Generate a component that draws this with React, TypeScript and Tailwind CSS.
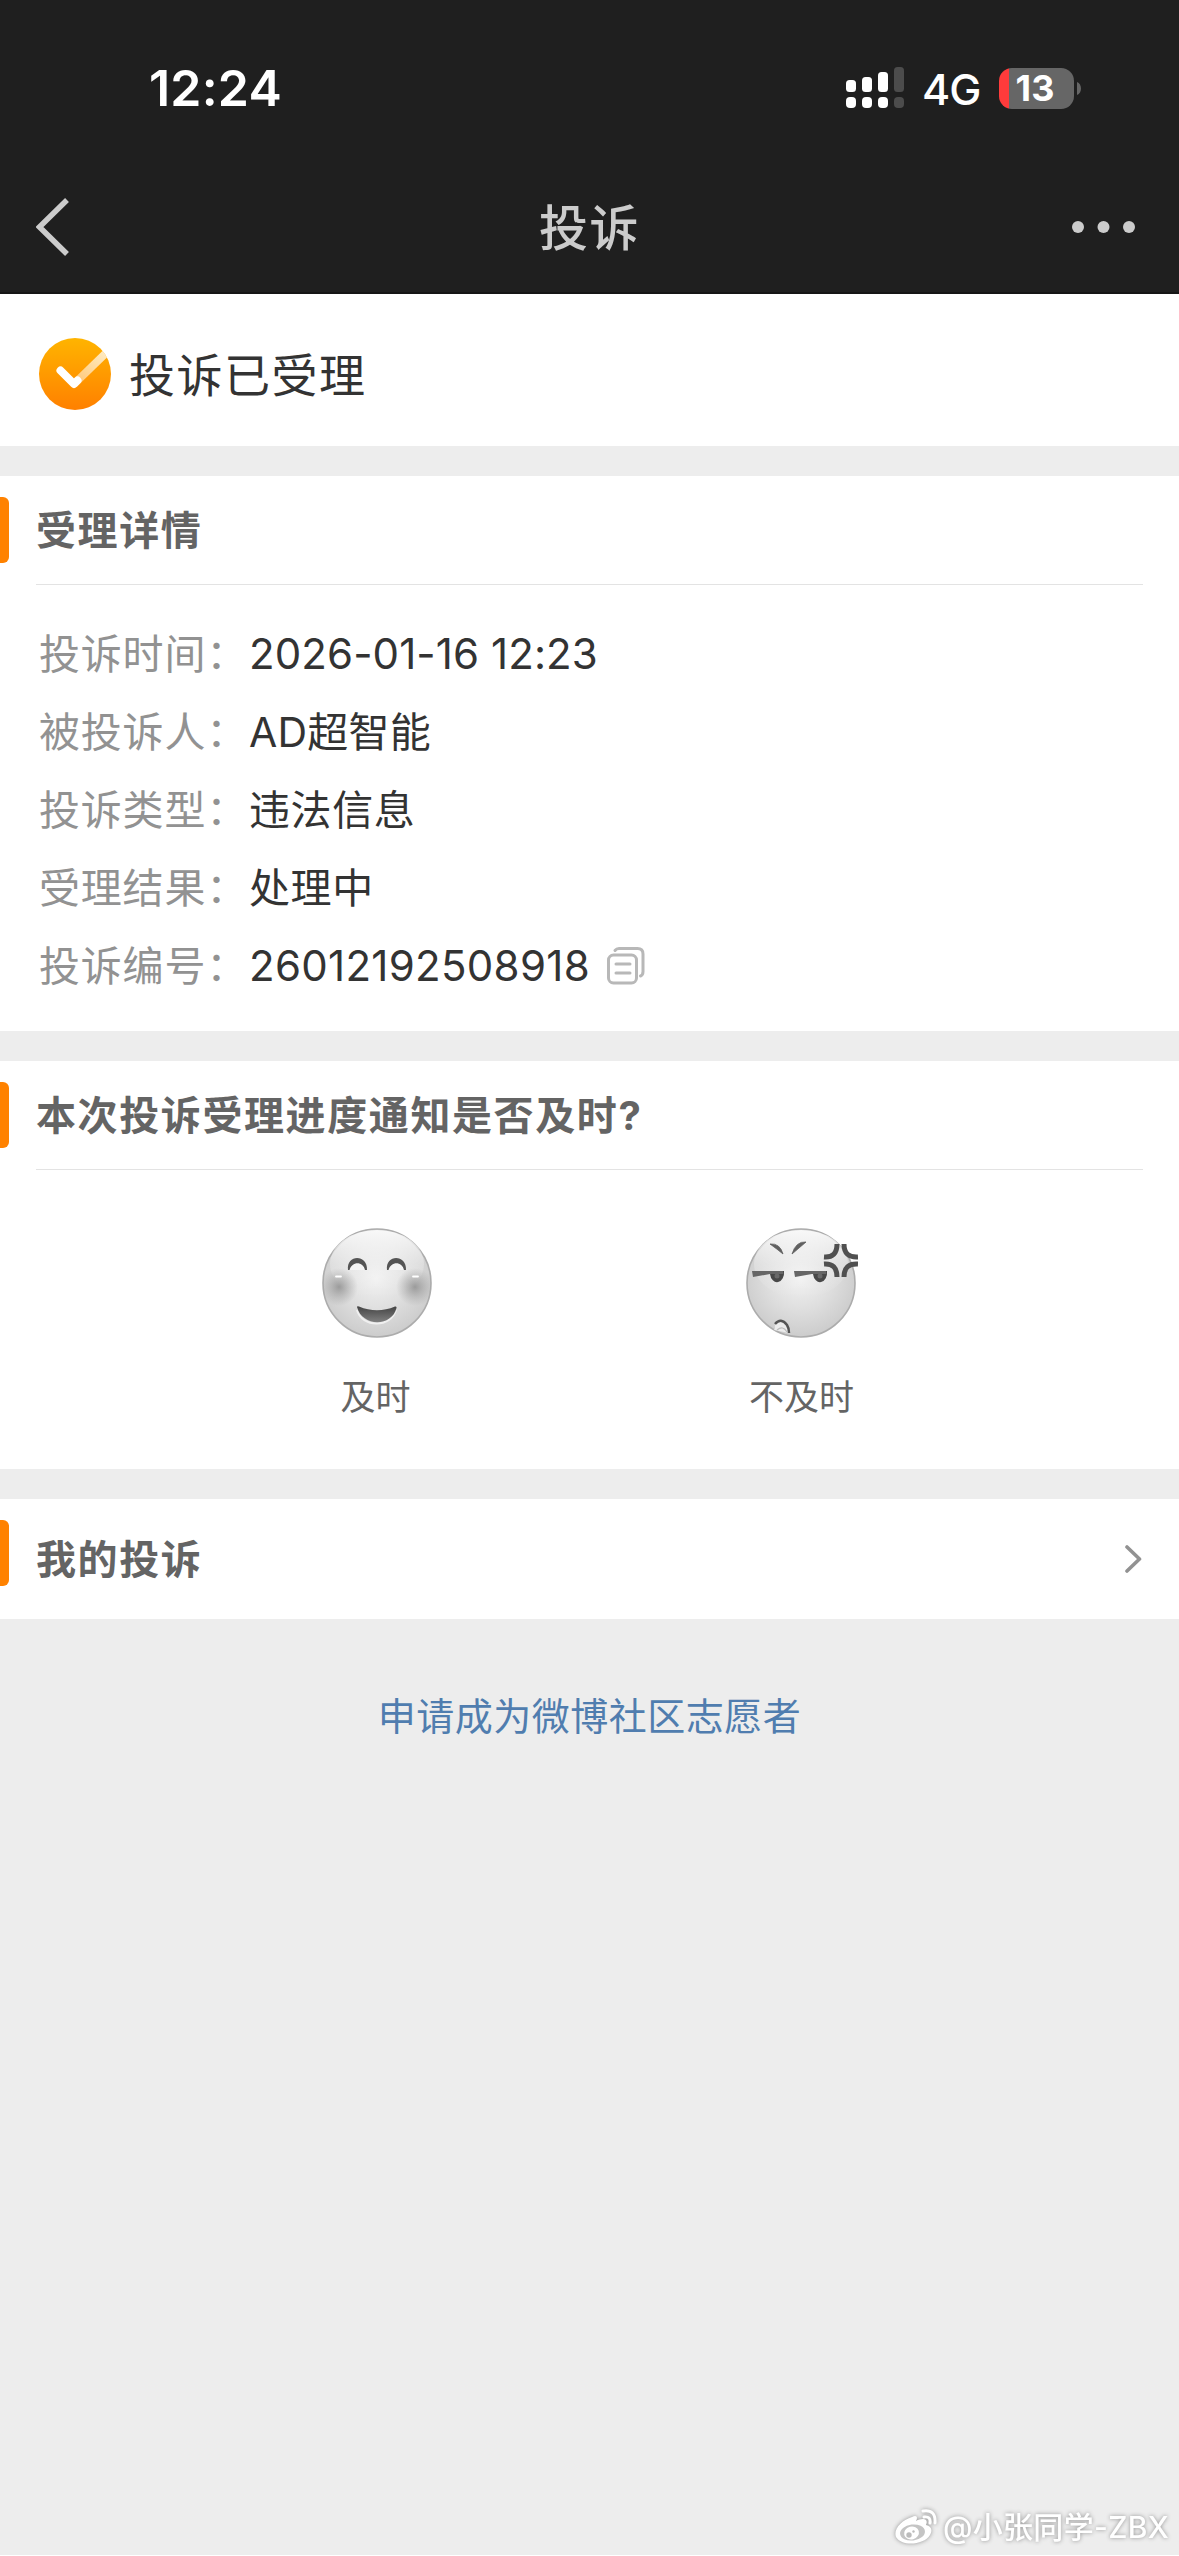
import React from 'react';

const rows = [
  { label: '投诉时间：', value: '2026-01-16 12:23', type: 'text-[42px] tracking-[0.1px]' },
  { label: '被投诉人：', value: 'AD超智能', type: 'text-[41px] tracking-[0.2px]' },
  { label: '投诉类型：', value: '违法信息', type: 'text-[41px] tracking-[0.6px]' },
  { label: '受理结果：', value: '处理中', type: 'text-[41px] tracking-[0.6px]' },
  { label: '投诉编号：', value: '26012192508918', type: 'text-[42px] tracking-[0.3px]', copy: true },
];

function Signal() {
  return (
    <svg width="58" height="42" viewBox="0 0 58 42" fill="#fff">
      <rect x="0" y="13" width="10" height="12" rx="3.5" />
      <rect x="16" y="10" width="10" height="15" rx="3.5" />
      <rect x="32" y="5" width="10" height="20" rx="3.5" />
      <rect x="48" y="0" width="10" height="25" rx="3.5" fill="#4c4c4c" />
      <rect x="0" y="30" width="10" height="11" rx="4" />
      <rect x="16" y="30" width="10" height="11" rx="4" />
      <rect x="32" y="30" width="10" height="11" rx="4" />
      <rect x="48" y="30" width="10" height="11" rx="4" fill="#4c4c4c" />
    </svg>
  );
}

function Battery() {
  return (
    <div className="flex items-center">
      <div className="flex h-[41px] w-[75px] items-center justify-center rounded-[13px] bg-[linear-gradient(to_right,#ff3b3b_0,#ff3b3b_10px,#666_10px)] pr-[3px]">
        <span className="text-[36px] leading-[41px] font-bold text-white">13</span>
      </div>
      <svg className="ml-[3px]" width="4" height="13" viewBox="0 0 4 13">
        <path d="M0 0C5.3 2 5.3 11 0 13Z" fill="#666" />
      </svg>
    </div>
  );
}

function CheckBadge() {
  return (
    <svg width="72" height="72" viewBox="0 0 72 72">
      <defs>
        <linearGradient id="badge" x1="0" y1="0" x2="0" y2="1">
          <stop offset="0" stopColor="#ffb400" />
          <stop offset="1" stopColor="#ff8000" />
        </linearGradient>
        <linearGradient id="tail" gradientUnits="userSpaceOnUse" x1="35" y1="46" x2="66" y2="16">
          <stop offset="0" stopColor="#fff" stopOpacity="0.45" />
          <stop offset="1" stopColor="#fff" stopOpacity="0.75" />
        </linearGradient>
        <clipPath id="disc"><circle cx="36" cy="36" r="36" /></clipPath>
      </defs>
      <circle cx="36" cy="36" r="36" fill="url(#badge)" />
      <path d="M35 46L68 14" stroke="url(#tail)" strokeWidth="8" clipPath="url(#disc)" />
      <path d="M21.5 32.5L35 46L38.5 42.5" fill="none" stroke="#fff" strokeWidth="8" strokeLinecap="round" strokeLinejoin="round" />
    </svg>
  );
}

function CopyIcon() {
  return (
    <svg width="38" height="38" viewBox="0 0 38 38" fill="none" stroke="#b8b8b8" strokeWidth="3" strokeLinecap="round">
      <rect x="1.5" y="8" width="28" height="28" rx="5" />
      <path d="M8 3.5Q9.500 1.500 12 1.500H30.500Q36 1.500 36 7V24.500Q36 28 33.500 29" />
      <path d="M9 17H23M9 26H23" />
    </svg>
  );
}

function FaceDefs() {
  return (
    <svg className="absolute size-0">
      <defs>
        <radialGradient id="face" gradientUnits="userSpaceOnUse" cx="54" cy="50" r="72">
          <stop offset="0" stopColor="#f1f1f1" />
          <stop offset="0.45" stopColor="#dedede" />
          <stop offset="0.8" stopColor="#cdcdcd" />
          <stop offset="1" stopColor="#c4c4c4" />
        </radialGradient>
        <linearGradient id="shine" x1="0" y1="0" x2="0" y2="1">
          <stop offset="0" stopColor="#fff" stopOpacity="0.85" />
          <stop offset="0.5" stopColor="#fff" stopOpacity="0.25" />
          <stop offset="1" stopColor="#fff" stopOpacity="0" />
        </linearGradient>
        <radialGradient id="blush">
          <stop offset="0" stopColor="#909090" stopOpacity="0.85" />
          <stop offset="1" stopColor="#a0a0a0" stopOpacity="0" />
        </radialGradient>
        <linearGradient id="mouth" x1="0" y1="0" x2="0" y2="1">
          <stop offset="0" stopColor="#444" />
          <stop offset="1" stopColor="#808080" />
        </linearGradient>
        <clipPath id="faceclip"><circle cx="55" cy="55" r="54" /></clipPath>
      </defs>
    </svg>
  );
}

function HappyFace() {
  return (
    <svg width="112" height="110" viewBox="0 0 112 110">
      <circle cx="55" cy="55" r="54" fill="url(#face)" stroke="#acacac" strokeWidth="1.6" />
      <ellipse cx="55" cy="36" rx="47" ry="34" fill="url(#shine)" />
      <g clipPath="url(#faceclip)">
        <circle cx="17" cy="59" r="19" fill="url(#blush)" />
        <circle cx="93" cy="59" r="19" fill="url(#blush)" />
      </g>
      <path d="M14 48.500H19M91 48.500H96" stroke="#fff" strokeWidth="1.800" strokeLinecap="round" />
      <path d="M27 42C27 33 43 33 43 42M66 42C66 33 82 33 82 42" fill="#f5f5f5" />
      <path d="M26 42C24 26 46 26 45 42H43C41 33 30 33 27.500 42ZM65 42C63 26 85 26 84 42H82C80 33 69 33 66.500 42Z" fill="#555" />
      <path d="M35 82C40 100 69 100 74 82" fill="none" stroke="#f0f0f0" strokeWidth="2" />
      <path d="M35 79Q35 78 37 78.500Q55 86 73 78.500Q75 78 74.500 80C70 99 40 99 35 79Z" fill="url(#mouth)" />
    </svg>
  );
}

function AngryFace() {
  return (
    <svg width="112" height="110" viewBox="0 0 112 110">
      <circle cx="55" cy="55" r="54" fill="url(#face)" stroke="#acacac" strokeWidth="1.6" />
      <ellipse cx="55" cy="36" rx="47" ry="34" fill="url(#shine)" />
      <path d="M24 16Q34 15 37 26Q31 21 24 16ZM60 14Q50 13 46 26Q53 20 60 14Z" fill="#606060" stroke="#606060" strokeWidth="0.800" />
      <path d="M24 43H38A7 9.500 0 0 1 24 46ZM67 43H81A7 9.500 0 0 1 67 46Z" fill="#484848" />
      <path d="M6 43H37V46H24L7 49ZM48 43H80V46H66L49 49Z" fill="#666" />
      <circle cx="31" cy="48" r="2.500" fill="#6a6a6a" /><circle cx="74" cy="48" r="2.500" fill="#6a6a6a" />
      <path d="M29 100C27 92 42 91 43 105L28 102Z" fill="#ececec" />
      <path d="M29 96Q35 89 41 97Q43 100 43 105" fill="none" stroke="#555" strokeWidth="2.500" />
      <path d="M31 102Q37 97 41 104" fill="none" stroke="#bbb" strokeWidth="1.200" />
      <path d="M78 29Q91 30 91 16M98 16Q98 30 112 29M78 36Q91 35 91 49M98 49Q98 35 112 36" fill="none" stroke="#505050" strokeWidth="5" />
    </svg>
  );
}

function SectionTitle({ children, low = false }: { children: React.ReactNode; low?: boolean }) {
  return (
    <div className="flex h-[66px] items-start">
      <div className="h-[66px] w-[9px] rounded-r-[6px] bg-[#ff8200]" />
      <h2 className={`ml-[27px] text-[40px] leading-[66px] font-bold tracking-[1.6px] text-[#646464] ${low ? 'pt-[7px]' : 'pt-px'}`}>{children}</h2>
    </div>
  );
}

function Watermark() {
  return (
    <div className="flex items-center justify-end gap-[6px] pr-[10px] pb-[8px] text-white drop-shadow-[0_0_2px_#909090]">
      <svg width="42" height="36" viewBox="0 0 42 36">
        <path d="M17 8C22 5 23 9 21 12C27 9 34 9 31 16C36 17 38 21 35 26C29 36 7 38 1 28C-2 20 7 11 17 8Z" fill="#fff" />
        <ellipse cx="17.500" cy="23.500" rx="12.500" ry="8" fill="#c4c4c4" transform="rotate(-7 17.500 23.500)" />
        <ellipse cx="16.500" cy="24" rx="7.500" ry="6.500" fill="#fff" transform="rotate(-15 16.500 24)" />
        <circle cx="14" cy="26" r="2.700" fill="#bbb" /><circle cx="18.500" cy="22.500" r="1.200" fill="#bbb" />
        <path d="M28 2Q41 0 40 14M29 8Q36 7 35 14" fill="none" stroke="#fff" strokeWidth="3" strokeLinecap="round" />
      </svg>
      <span className="text-[30px] leading-[40px] font-medium tracking-[0.3px]">@小张同学-ZBX</span>
    </div>
  );
}

export default function App() {
  return (
    <div className="flex h-[2556px] w-[1179px] flex-col overflow-hidden bg-[#ededed] font-['Inter','Noto_Sans_CJK_SC',sans-serif]">
      <FaceDefs />
      <header className="flex h-[294px] shrink-0 flex-col border-b-2 border-[#161616] bg-[#1f1f1f]">
        <div className="flex h-[176px] items-center justify-between pr-[98px] pl-[149px]">
          <span className="text-[50px] leading-[60px] font-semibold tracking-[0.2px] text-white">12:24</span>
          <div className="flex items-center">
            <Signal />
            <span className="ml-[18px] w-[77px] pt-[2px] text-[43px] leading-[42px] font-medium tracking-[-1px] text-white">4G</span>
            <Battery />
          </div>
        </div>
        <div className="flex h-[102px] items-center justify-between pr-[43px] pl-[36px]">
          <svg width="64" height="58" viewBox="0 0 64 58"><path d="M31 2L3.500 29L31 56" fill="none" stroke="#ccc" strokeWidth="5.500" /></svg>
          <h1 className="pt-[4px] pl-[7px] text-[49px] leading-[60px] font-medium tracking-[1.5px] text-[#ccc]">投诉</h1>
          <svg width="64" height="12" viewBox="0 0 64 12" fill="#ccc"><circle cx="6" cy="6" r="6" /><circle cx="31.500" cy="6" r="6" /><circle cx="57" cy="6" r="6" /></svg>
        </div>
      </header>

      <main className="flex flex-col gap-[30px]">
        <section className="flex h-[152px] items-center gap-[18px] bg-white pt-[8px] pl-[39px]">
          <CheckBadge />
          <p className="pt-[2px] text-[46px] leading-[60px] tracking-[1.5px] text-[#333]">投诉已受理</p>
        </section>

        <section className="h-[555px] bg-white pt-[21px]">
          <SectionTitle>受理详情</SectionTitle>
          <div className="mx-[36px] mt-[21px] border-t border-[#e3e3e3] pt-[30px]">
            {rows.map((r) => (
              <div key={r.label} className="flex h-[78px] items-center pl-[3px] leading-[60px]">
                <span className="w-[210px] text-[41px] tracking-[0.8px] whitespace-nowrap text-[#929292]">{r.label}</span>
                <span className={`text-[#333] ${r.type}`}>{r.value}</span>
                {r.copy && <div className="ml-[17px]"><CopyIcon /></div>}
              </div>
            ))}
          </div>
        </section>

        <section className="h-[408px] bg-white pt-[21px]">
          <SectionTitle>本次投诉受理进度通知是否及时?</SectionTitle>
          <div className="mx-[36px] mt-[21px] flex justify-center gap-[312px] border-t border-[#e3e3e3] pt-[58px]">
            <div className="flex w-[112px] flex-col items-center gap-[29px]">
              <HappyFace />
              <span className="mr-[4px] text-[35px] leading-[60px] whitespace-nowrap text-[#646464]">及时</span>
            </div>
            <div className="flex w-[112px] flex-col items-center gap-[29px]">
              <AngryFace />
              <span className="text-[35px] leading-[60px] whitespace-nowrap text-[#646464]">不及时</span>
            </div>
          </div>
        </section>

        <section className="flex h-[120px] items-center justify-between bg-white pr-[37px] pb-[12px]">
          <SectionTitle low>我的投诉</SectionTitle>
          <svg className="mt-[12px]" width="18" height="30" viewBox="0 0 18 30"><path d="M3 3L15.500 15L3 27" fill="none" stroke="#929292" strokeWidth="3.600" strokeLinecap="round" strokeLinejoin="round" /></svg>
        </section>
      </main>

      <a className="mt-[67px] text-center text-[38px] leading-[60px] tracking-[0.5px] text-[#507daf]">申请成为微博社区志愿者</a>
      <footer className="mt-auto border-b border-white"><Watermark /></footer>
    </div>
  );
}
